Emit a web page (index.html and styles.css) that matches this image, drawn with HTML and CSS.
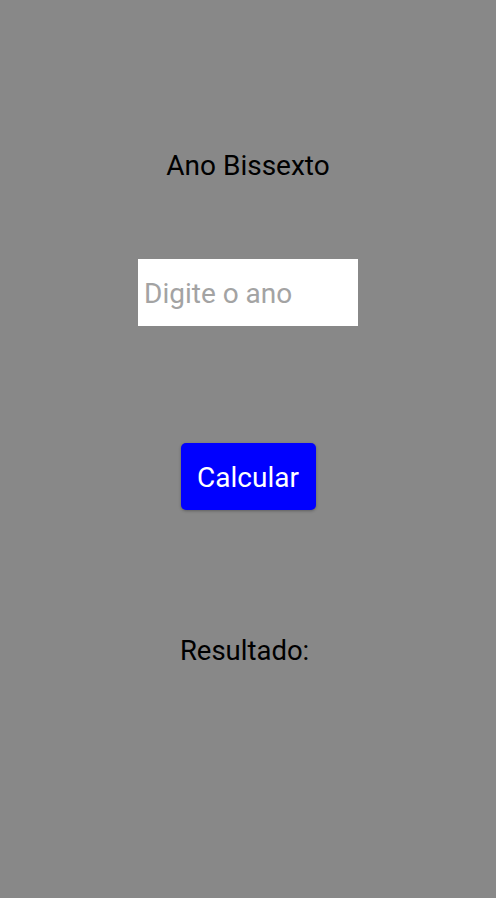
FILE: index.html
```html
<!DOCTYPE html>
<html lang="pt">
<head>
<meta charset="utf-8">
<title>Ano Bissexto</title>
<link rel="stylesheet" href="styles.css">
</head>
<body>
<main class="screen">
  <h1 class="title">Ano Bissexto</h1>
  <input class="year-input" type="text" placeholder="Digite o ano">
  <button class="calc-btn" type="button">Calcular</button>
  <p class="result">Resultado:&nbsp;</p>
</main>
</body>
</html>
```
FILE: styles.css
```css
html, body {
  margin: 0;
  padding: 0;
  background: #888888;
  height: 100%;
}
.screen {
  display: flex;
  flex-direction: column;
  align-items: center;
  font-family: Roboto, "Noto Sans", sans-serif;
  padding-top: 151px;
}
.title {
  margin: 0;
  font-size: 28px;
  font-weight: 400;
  line-height: 30px;
  color: #000;
}
.year-input {
  margin-top: 78px;
  width: 220px;
  height: 67px;
  box-sizing: border-box;
  border: none;
  outline: none;
  background: #fff;
  padding: 2px 6px 0;
  font-family: Roboto, sans-serif;
  font-size: 28px;
  color: #000;
}
.year-input::placeholder {
  color: #a3a3a3;
}
.calc-btn {
  margin-top: 117px;
  width: 135px;
  height: 67px;
  border: none;
  border-radius: 5px;
  background: #0000ff;
  color: #fff;
  font-family: Roboto, sans-serif;
  font-size: 28px;
  box-shadow: 0 1px 3px rgba(0,0,0,0.3);
  padding: 2px 0 0;
}
.result {
  margin: 126px 0 0;
  font-size: 27.5px;
  line-height: 30px;
  color: #000;
  white-space: pre;
}
```
